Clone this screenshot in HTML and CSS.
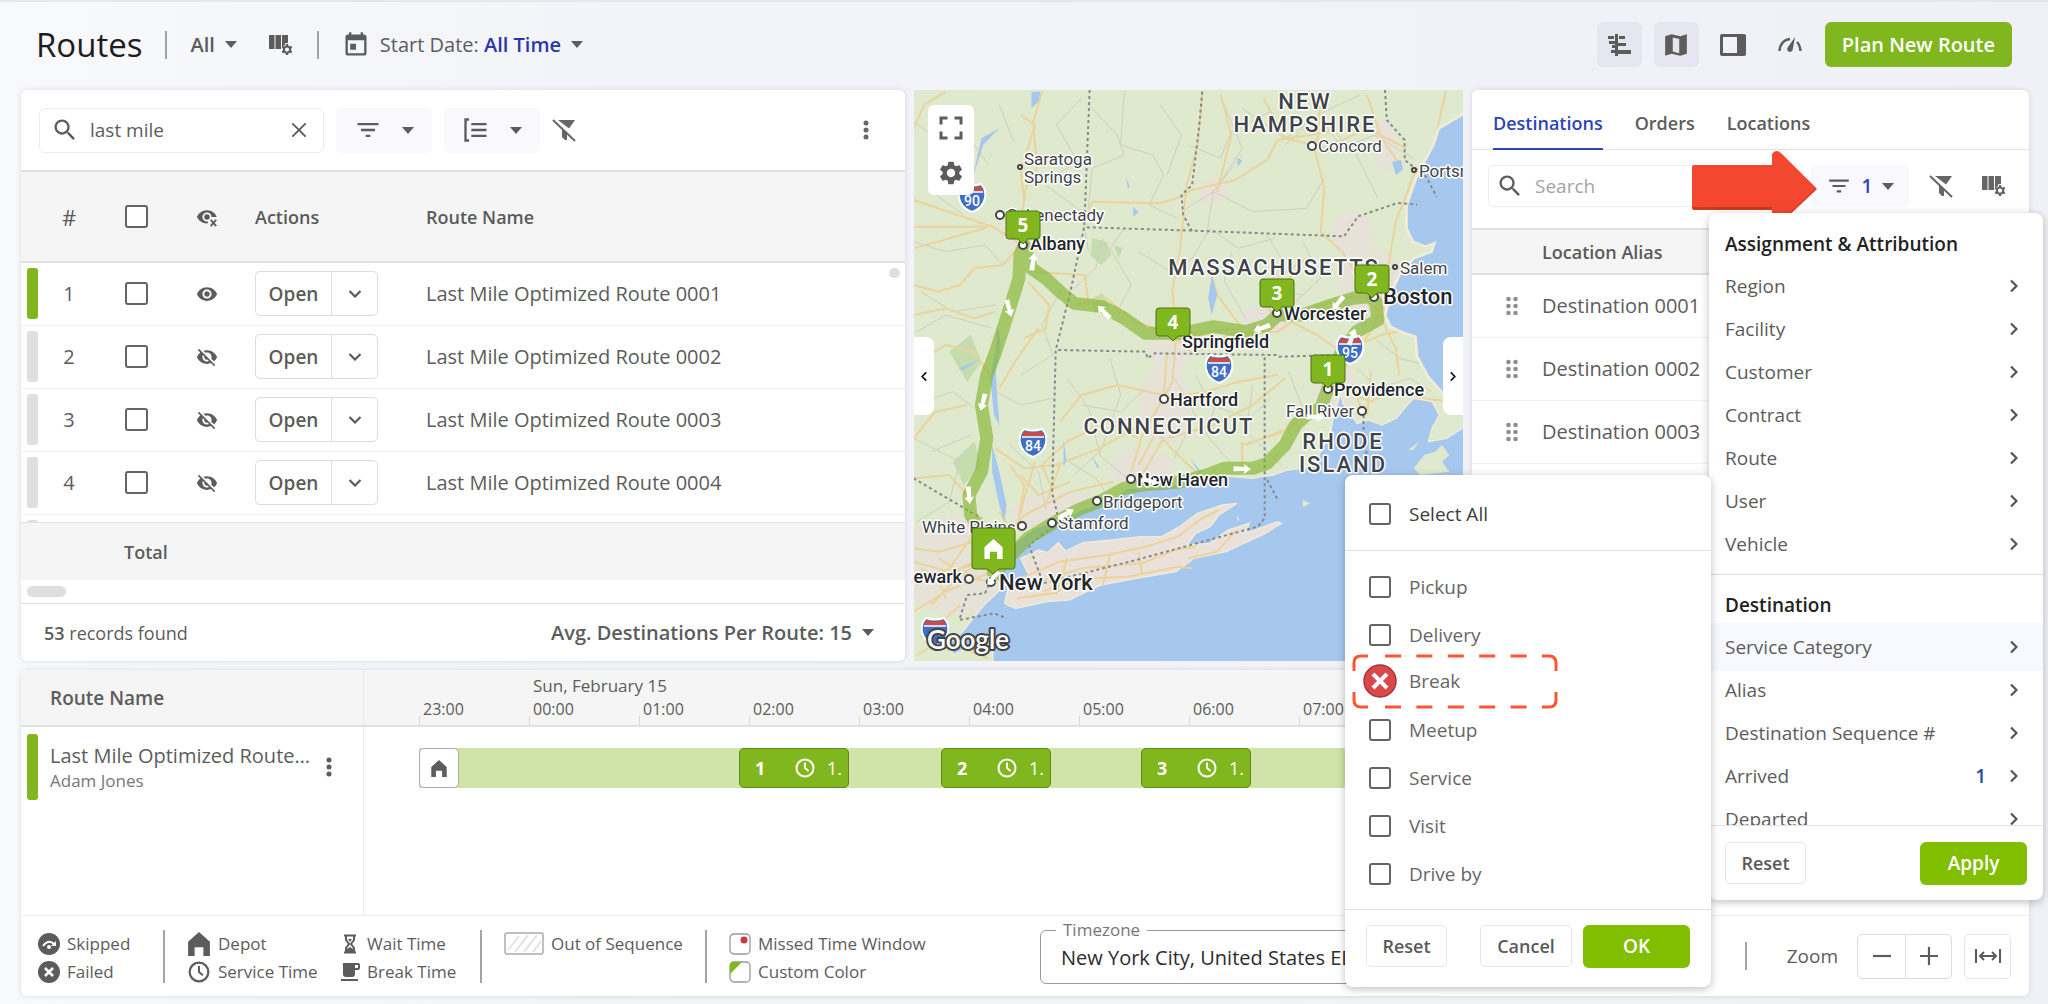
FILE: index.html
```html
<!DOCTYPE html>
<html lang="en">
<head>
<meta charset="utf-8">
<title>Routes</title>
<meta name="viewport" content="width=device-width, initial-scale=1">
<link rel="stylesheet" href="styles.css">
</head>
<body>
<svg class="sprite" aria-hidden="true">
  <symbol id="search" viewBox="0 0 24 24"><path d="M15.5 14h-.79l-.28-.27C15.41 12.59 16 11.11 16 9.5 16 5.91 13.09 3 9.5 3S3 5.91 3 9.5 5.91 16 9.5 16c1.61 0 3.09-.59 4.23-1.57l.27.28v.79l5 4.99L20.49 19l-4.99-5zm-6 0C7.01 14 5 11.99 5 9.5S7.01 5 9.5 5 14 7.01 14 9.5 11.99 14 9.5 14z"/></symbol>
  <symbol id="close" viewBox="0 0 24 24"><path d="M4 4l16 16M20 4L4 20" fill="none" stroke="currentColor" stroke-width="2.2"/></symbol>
  <symbol id="filter" viewBox="0 0 24 24"><path d="M10 18h4v-2h-4v2zM3 6v2h18V6H3zm3 7h12v-2H6v2z"/></symbol>
  <symbol id="group" viewBox="0 0 24 24"><path d="M6 3H3v18h3M8 7h13M8 12h13M8 17h13" fill="none" stroke="currentColor" stroke-width="2"/></symbol>
  <symbol id="nofilter" viewBox="0 0 24 24"><path d="M6 2h17l-6 8.500zM10 11l5 5v6h-2l-3-3z"/><path d="M1 2l22 21" stroke="currentColor" stroke-width="2"/></symbol>
  <symbol id="caret" viewBox="0 0 12 7"><path d="M0 0h12L6 7z"/></symbol>
  <symbol id="dots" viewBox="0 0 6 20"><circle cx="3" cy="3" r="2.500"/><circle cx="3" cy="10" r="2.500"/><circle cx="3" cy="17" r="2.500"/></symbol>
  <symbol id="drag" viewBox="0 0 12 20"><circle cx="2.500" cy="3" r="2.300"/><circle cx="2.500" cy="10" r="2.300"/><circle cx="2.500" cy="17" r="2.300"/><circle cx="9.500" cy="3" r="2.300"/><circle cx="9.500" cy="10" r="2.300"/><circle cx="9.500" cy="17" r="2.300"/></symbol>
  <symbol id="eye" viewBox="0 0 24 24"><path d="M12 4.500C7 4.500 2.730 7.610 1 12c1.730 4.390 6 7.500 11 7.500s9.270-3.110 11-7.500c-1.730-4.390-6-7.500-11-7.500zM12 17c-2.760 0-5-2.240-5-5s2.240-5 5-5 5 2.240 5 5-2.240 5-5 5zm0-8c-1.660 0-3 1.340-3 3s1.340 3 3 3 3-1.340 3-3-1.340-3-3-3z"/></symbol>
  <symbol id="eyeoff" viewBox="0 0 24 24"><path d="M12 7c2.760 0 5 2.240 5 5 0 .65-.13 1.260-.36 1.830l2.920 2.920c1.510-1.260 2.700-2.890 3.430-4.750-1.730-4.390-6-7.500-11-7.500-1.400 0-2.740.25-3.980.7l2.160 2.160C10.740 7.130 11.350 7 12 7zM2 4.270l2.740 2.740C3.080 8.300 1.780 10.020 1 12c1.730 4.390 6 7.500 11 7.500 1.550 0 3.030-.3 4.380-.84l3.350 3.340L21 20.730 3.270 3 2 4.270zM7.530 9.800l1.550 1.550c-.05.21-.08.43-.08.65 0 1.660 1.340 3 3 3 .22 0 .44-.03.65-.08l1.550 1.550c-.67.33-1.410.53-2.200.53-2.760 0-5-2.240-5-5 0-.79.2-1.530.53-2.200z"/></symbol>
  <symbol id="eyex" viewBox="0 0 24 24"><path d="M13 18.900c-5.400.6-9.800-2.500-12-6.900 1.730-4.390 6-7.500 11-7.500s9.270 3.110 10.700 7.500h-5.700c0-2.760-2.240-5-5-5s-5 2.240-5 5 2.240 5 5 5h1z"/><circle cx="12" cy="12" r="3"/><path d="M16 15l6 7M22 15l-6 7" stroke="currentColor" stroke-width="2"/></symbol>
  <symbol id="columns" viewBox="0 0 24 24"><path d="M1 2h5.500v14H1zM7.500 2H13v14H7.500zM14 2h6v8h-2.500l-1 2.500-2.500 1z"/><path fill-rule="evenodd" d="M18 11h2l.4 1.700 1.300.7 1.600-.6 1 1.800-1.200 1.200v1.500l1.200 1.200-1 1.700-1.600-.5-1.300.7-.4 1.700h-2l-.4-1.700-1.300-.7-1.600.5-1-1.700 1.200-1.200v-1.500l-1.200-1.200 1-1.800 1.600.6 1.300-.7zM19 14.500a2.100 2.100 0 1 0 0 4.200 2.100 2.100 0 0 0 0-4.200z"/></symbol>
  <symbol id="calendar" viewBox="0 0 24 24"><path d="M19 3h-1V1h-2v2H8V1H6v2H5c-1.110 0-2 .9-2 2v14c0 1.100.89 2 2 2h14c1.100 0 2-.9 2-2V5c0-1.100-.9-2-2-2zm0 16H5V8h14v11zM7 11h5v5H7z"/></symbol>
  <symbol id="gantt" viewBox="0 0 24 24"><path d="M1 3h6v3H1zM7 1h4v22H8V1zM12 3h6v3h-6zM2 8h6v3H2zM11 10h8v3h-8zM5 12h4v3H5zM4 17h5v3H4zM11 17h13v4H11z"/></symbol>
  <symbol id="map" viewBox="0 0 24 24"><path fill-rule="evenodd" d="M2 4l6-2 8 2 6-2v18l-6 2-8-2-6 2zM9 5v13l6 1.500V6.500z"/></symbol>
  <symbol id="side" viewBox="0 0 26 22"><path fill-rule="evenodd" d="M2 0h22a2 2 0 0 1 2 2v18a2 2 0 0 1-2 2H2a2 2 0 0 1-2-2V2a2 2 0 0 1 2-2zM3 3v16h14V3z"/></symbol>
  <symbol id="gauge" viewBox="0 0 24 20"><path d="M1.500 16C2 9 6 4.500 12 4M19 7c2 2 3.200 5 3.500 9" fill="none" stroke="currentColor" stroke-width="2.400"/><path d="M17 2l-2.300 12.500a2.800 2.800 0 1 1-5.200-1.800z"/></symbol>
  <symbol id="chev" viewBox="0 0 8 14"><path d="M1 1.500L6.500 7 1 12.500" fill="none" stroke="currentColor" stroke-width="2.200"/></symbol>
  <symbol id="home" viewBox="0 0 20 22"><path d="M10 0l10 9v13h-6v-8H6v8H0V9z"/></symbol>
  <symbol id="clock" viewBox="0 0 20 20"><circle cx="10" cy="10" r="8.500" fill="none" stroke="currentColor" stroke-width="2"/><path d="M10 4.500V10l3.500 3" fill="none" stroke="currentColor" stroke-width="1.800"/></symbol>
  <symbol id="gear" viewBox="0 0 24 24"><path d="M19.140 12.940c.04-.3.06-.61.06-.94 0-.32-.02-.64-.07-.94l2.030-1.580c.18-.14.23-.41.12-.61l-1.920-3.320c-.12-.22-.37-.29-.59-.22l-2.390.96c-.5-.38-1.030-.7-1.620-.94l-.36-2.540c-.04-.24-.24-.41-.48-.41h-3.840c-.24 0-.43.17-.47.41l-.36 2.540c-.59.24-1.130.57-1.620.94l-2.390-.96c-.22-.08-.47 0-.59.22L2.740 8.870c-.12.21-.08.47.12.61l2.030 1.580c-.05.3-.09.63-.09.94s.02.64.07.94l-2.030 1.580c-.18.14-.23.41-.12.61l1.920 3.320c.12.22.37.29.59.22l2.390-.96c.5.38 1.030.7 1.620.94l.36 2.540c.05.24.24.41.48.41h3.840c.24 0 .44-.17.47-.41l.36-2.540c.59-.24 1.130-.56 1.620-.94l2.390.96c.22.08.47 0 .59-.22l1.920-3.320c.12-.22.07-.47-.12-.61l-2.010-1.580zM12 15.600c-1.980 0-3.600-1.620-3.600-3.600s1.620-3.600 3.600-3.600 3.600 1.620 3.600 3.600-1.620 3.600-3.600 3.600z"/></symbol>
  <symbol id="full" viewBox="0 0 24 24"><path d="M2 8.500V2h6.500M15.500 2H22v6.500M22 15.500V22h-6.500M8.500 22H2v-6.500" fill="none" stroke="currentColor" stroke-width="3"/></symbol>
  <symbol id="arrow" viewBox="0 0 12 18" overflow="visible"><path d="M6 0l5 7-3-.5.500 11h-5l.500-11-3 .5z"/></symbol>
  <symbol id="shield" viewBox="0 0 28 30"><path d="M5 1q9 3 18 0l3 4q2 5 1 10-2 10-13 14Q3 25 1 15 0 10 2 5z" fill="#3f6fc4" stroke="#fff" stroke-width="2"/><path d="M5 3q9 3 18 0l2 5H3z" fill="#cf4a43"/><path d="M3 9h22" stroke="#fff" stroke-width="1.500"/></symbol>
</svg>

<div class="page">
  <header class="top">
    <h1>Routes</h1>
    <i class="rule"></i>
    <button class="plain" type="button">All <svg class="i-caret"><use href="#caret"/></svg></button>
    <button class="plain" type="button" aria-label="Columns"><svg class="i24"><use href="#columns"/></svg></button>
    <i class="rule"></i>
    <button class="plain date" type="button"><svg class="i28"><use href="#calendar"/></svg><span>Start Date: <b>All Time</b></span><svg class="i-caret"><use href="#caret"/></svg></button>
    <nav class="views">
      <button class="view on" type="button" aria-label="Timeline"><svg class="i24"><use href="#gantt"/></svg></button>
      <button class="view on" type="button" aria-label="Map"><svg class="i26"><use href="#map"/></svg></button>
      <button class="view" type="button" aria-label="Side panel"><svg class="i-side"><use href="#side"/></svg></button>
      <button class="view" type="button" aria-label="Dashboard"><svg class="i24"><use href="#gauge"/></svg></button>
      <button class="green plan" type="button">Plan New Route</button>
    </nav>
  </header>

  <main class="panels">
    <section class="card routes">
      <div class="tools">
        <label class="search"><svg class="i28"><use href="#search"/></svg><input type="text" value="last mile" aria-label="Search routes"><svg class="i-close"><use href="#close"/></svg></label>
        <button class="tool" type="button" aria-label="Filter"><svg class="i28"><use href="#filter"/></svg><svg class="i-caret"><use href="#caret"/></svg></button>
        <button class="tool" type="button" aria-label="Group"><svg class="i28"><use href="#group"/></svg><svg class="i-caret"><use href="#caret"/></svg></button>
        <button class="plain" type="button" aria-label="Clear filters"><svg class="i24"><use href="#nofilter"/></svg></button>
        <button class="plain more" type="button" aria-label="More"><svg class="i-dots"><use href="#dots"/></svg></button>
      </div>
      <div class="grid-view">
        <table class="list">
          <colgroup><col class="c-bar"><col class="c-num"><col class="c-check"><col class="c-eye"><col class="c-act"><col></colgroup>
          <thead><tr><th></th><th class="mid hash">#</th><th class="mid"><input type="checkbox" aria-label="Select all routes"></th><th class="mid"><svg class="i22"><use href="#eyex"/></svg></th><th>Actions</th><th>Route Name</th></tr></thead>
          <tbody>
            <tr><td class="bar"><i class="on"></i></td><td class="mid">1</td><td class="mid"><input type="checkbox" aria-label="Route 1"></td><td class="mid"><svg class="i22"><use href="#eye"/></svg></td><td><span class="split"><button type="button">Open</button><button type="button" aria-label="More actions"><svg class="i-down"><use href="#chev"/></svg></button></span></td><td>Last Mile Optimized Route 0001</td></tr>
            <tr><td class="bar"><i></i></td><td class="mid">2</td><td class="mid"><input type="checkbox" aria-label="Route 2"></td><td class="mid"><svg class="i22"><use href="#eyeoff"/></svg></td><td><span class="split"><button type="button">Open</button><button type="button" aria-label="More actions"><svg class="i-down"><use href="#chev"/></svg></button></span></td><td>Last Mile Optimized Route 0002</td></tr>
            <tr><td class="bar"><i></i></td><td class="mid">3</td><td class="mid"><input type="checkbox" aria-label="Route 3"></td><td class="mid"><svg class="i22"><use href="#eyeoff"/></svg></td><td><span class="split"><button type="button">Open</button><button type="button" aria-label="More actions"><svg class="i-down"><use href="#chev"/></svg></button></span></td><td>Last Mile Optimized Route 0003</td></tr>
            <tr><td class="bar"><i></i></td><td class="mid">4</td><td class="mid"><input type="checkbox" aria-label="Route 4"></td><td class="mid"><svg class="i22"><use href="#eyeoff"/></svg></td><td><span class="split"><button type="button">Open</button><button type="button" aria-label="More actions"><svg class="i-down"><use href="#chev"/></svg></button></span></td><td>Last Mile Optimized Route 0004</td></tr>
            <tr><td class="bar"><i></i></td><td></td><td></td><td></td><td><span class="split"><button type="button"></button><button type="button" aria-label="More actions"></button></span></td><td></td></tr>
          </tbody>
        </table>
        <i class="vthumb"></i>
      </div>
      <div class="total">Total</div>
      <div class="hscroll"><i></i></div>
      <footer class="foot"><span><b>53</b> records found</span><button class="plain strong" type="button">Avg. Destinations Per Route: 15 <svg class="i-caret"><use href="#caret"/></svg></button></footer>
    </section>

    <section class="map">
      <svg class="canvas" viewBox="914 90 549 571" preserveAspectRatio="xMidYMid slice" role="img" aria-label="Route map">
        <rect x="814" y="0" width="800" height="800" fill="#dfe9cd"/>
        <svg x="910" y="85" width="560" height="585" viewBox="0 0 1568 1755" preserveAspectRatio="none" overflow="visible">
          <g fill="#e9e0dc" opacity=".75">
            <ellipse cx="300" cy="430" rx="45" ry="60"/><ellipse cx="730" cy="790" rx="60" ry="70"/><ellipse cx="715" cy="960" rx="70" ry="120"/><ellipse cx="1290" cy="610" rx="90" ry="120"/><ellipse cx="1190" cy="910" rx="60" ry="90"/><ellipse cx="650" cy="1150" rx="90" ry="60"/><ellipse cx="130" cy="1440" rx="170" ry="150"/><ellipse cx="430" cy="1280" rx="150" ry="60"/><ellipse cx="1000" cy="700" rx="70" ry="50"/><ellipse cx="1330" cy="180" rx="30" ry="80"/><ellipse cx="1240" cy="450" rx="60" ry="70"/><ellipse cx="850" cy="320" rx="40" ry="40"/>
          </g>
          <g fill="#b9d6a2" opacity=".7"><path d="M510 460l40 10 15 40-30 30-30-30zM510 640l30-15 15 40-40 20zM110 800l60-50 30 80-40 60zM120 1130l60-60 20 70-50 60zM570 480l25 10-10 30z"/></g>
          <g class="minor">
            <path d="M10 110l80 60 70-20 60 90M120 200l-60 120 90 70M10 470l90 30 110-20 50 60M30 620l90 60 120-20M20 740l80-50 130 40M500 60l80 90 20 60-90 40-10 120M600 20l-10 160 90 30 30 60-40 90 80 40M700 60l60 90-40 120M780 180l90 40 30-80 110-60M880 60l50 130-60 100M930 70l120 90 60-40M850 320l-90 60M850 320l110 60 150-10 50-90M850 320l-20 130M850 320l80-110M540 460l-20 90-60 60M600 430l-40 60 60 110-40 80M640 500l90 60 60-40 50-90 80 60 100-30M900 500l-20 90 60 110M1000 450l50 90-60 70 110 20M1100 470l50 110-80 80"/>
            <path d="M10 960l110-40 60 50M60 1100l110-50M240 920l70 40 90-20M440 880l60 90 30 130-70 70M480 960l110 20 60-60M560 820l30 110-60 180 90 80M800 870l40 90 110 40 60-60M860 940l-30 110 90 110M960 900l-20 140 100 100M1060 860l40 110-50 60M740 880l60 110-60 130M1250 850l60 60 90-30 60 40M1300 760l70 60 110 30M430 1120l90 60 60 90M280 1080l80 80 20 110M10 1060l130 70-30 120-90 60M1410 220l-110-70-90 40-60-90M1170 120l80 90 60 130M1050 180l110-100 100-50M480 40l-70 80 60 110-90 60M380 300l100 80 20 120M430 600l-60 120 30 90-90 60M250 60l40 110"/>
          </g>
          <g class="roads">
            <path d="M370 20l-25 90 10 140-30 60-15 100 20 90M10 345l220 80 80 50M10 490l200-60M310 90l40 30-40 140 10 80M10 130l30-70 60-40M10 425h210M310 480l-50 60-80 10-40 50-60 20-70-20M320 410l180-30 10-30 190 5 60-20 30-20 120-30 90-60 30-60 120-20 40-10M820 20l-15 160-30 120-20 200-20 110 10 150-10 130-20 40M870 30l30 120-40 170M990 40l60 120 80 20 30 130-10 130 60 60 60 100 20 80M1150 190l70-30 60-30 110 60M1150 30l-10 150M1280 30l40 130 60 90M1500 20l-40 190-50 60-20 60-30 80-20 130-40 60-30 40"/>
            <path d="M10 690l90-20 80 30 60-20M340 560l150 10 10 90M330 590l60 70-10 70-60 30M460 660l90-20 80 70 100 35 60 60 110-60 130-5 90-70 100-30 190-25M740 750l190-20-70-100-20-80M1020 700l-30-60 40-60 80-60M1070 560l-40 130 110 60 80 60M1290 640l60 50 130 10 20 60M1300 660l60 130 10 80M1210 800l110-50 90-20M1170 900l60-70 60-90 20-50M360 730l-60 90-50 90M10 840l90-60 80 20 60 100M720 800l-10 140-60 110-30 110M720 940l110-20 90-30 110-20M710 930l-130-30-100 30-60 80M640 1060l-90-50-110 60-70 70 30 80M720 1060l130-40 110-60 90-80"/>
            <path d="M240 1090l80 60 90-10 120-50 100-60M310 1170l50 60 90-40M280 1140l40 60-20 130M350 1130l-30 110-30 120M420 1140l-40 120M10 1060l60-80 90-20M10 1180l100-10 50 60M930 1070v90M800 1160l-60-60-50-60-50 100M650 1170l60-110M1050 1040l-120 40M1110 990l-50 40-120 50M1180 930l60-30 30 90M1200 910l90 40 80-40 60 30 90 10M1290 860l-10 130M260 1360l60-70 130-70 120-30M250 1280l40 70M200 1300l60 60M10 1390l70 10 100-30M10 1430l100 30 130-40M20 1500l90-50 60-90M60 1560l70-80 80-60M10 1580l90-60 130-60M80 1420l90 60 60 10M100 1540l-20-60-50-30M30 1660l60-50 50-50M20 1710l90-60 60 50 50 20M120 1460l80-40 60-80"/>
          </g>
          <g fill="#a6c8ee">
            <path d="M340 20h25l-5 30-20 20zM250 130l-50 30-25 120 30-100zM605 275l10 30-5 5zM625 365l15 15-15 15zM845 570l15 60-15 60-10-50zM915 220l15 5-10 20zM1350 230l25-5 5 30-20 15zM135 850l60-25-30 20-15 10zM245 720l10 60-15 80 10 160-15-30-10-110 15-90zM230 1080l20 80 20 100-5 50-15-50-20-100zM430 1065l8 60-8 20zM510 1115l20 30-5 5zM785 1120l30 40-5 5z"/>
            <path d="M1590 60l-45 30-65 40-15 50-45 90-30 90v70l18 40 35 15 25-10-8 25-50 20-40 50-25 60-15 60 15 35 40 20 30 10 5 60 30 60 50 60h120z" stroke="#f1ecd8" stroke-width="8"/>
            <path d="M232 1640v200h1400v-840l-70 20-60 40-50 10 10-40 20-40-20-40-50-10-20 20-30 40-40 20-40-15-30 10-40-60-5-30-20 60-10 60-30 60-20 40-70 10-40 15-60 10-100-10-60 20-90 15-100 5-40 30-90 35-70 35-60 20-60 50-30 60 10 60-60 60-60 80-40 40 15 30z" stroke="#f1ecd8" stroke-width="4"/>
          </g>
          <path d="M310 1420l50-25 25 8 30-30 20 25 50-25 80-8 80-10h60l50-30 50-40 70-25 40-5-50 35-25 35-40 20-25 35 65-5 50-40 60-20-10 30 90-35 10 5-45 30-110 55-90 20-50 40-110 20-100 20-90 45-60 5-90 20-30-15 10-50 60-30z" fill="#eae2da" stroke="#f1ecd8" stroke-width="4"/>
          <path d="M250 1570l120-25 130-30-130 35zM1100 1245l20 10-20 12zM1410 1150l30-40 30-10 20-20 20 30-20 20 20 30-80 10zM1395 1095l30-25-15 25zM915 1290l8 15-5 5z" fill="#dfe9cd"/>
          <g class="roads"><path d="M310 1480l110-50 130-20 110-25 90-30 60-50 55-30M330 1500l150-50 170-15 90-40 60-10M370 1520l110-40 130-5 140-30 40 5M300 1540l100-15 90-40M440 1420l-30 110M560 1410l-20 90M640 1400l10 70M780 1420l80-20 50-60"/></g>
          <g class="states">
            <path d="M503 15l-15 410-40 200-40 170-10 430 20 85-85 70 40 115 260-70 340-100 20-25 0-485M495 427l300 10 420 17 40-60 110-40 55 5M818 20l-8 100-20 180-30 30 5 60 25 50M1330 15l5 90 50 60v60l60 50 30 60M415 795l245 5 5 20 20-15 340 5 5 5 180-5M10 1180l190 120M1000 1185l30 60M1270 990v50l10 80M220 1500l-10 25-50 5-22 75 98-20 35 15"/>
          </g>
          <path class="track" d="M235 1480L255 1440 330 1360 400 1315 470 1275 540 1245 600 1210 650 1200 760 1190 830 1170 880 1150 960 1150 1000 1135 1050 1080 1080 1020 1110 990 1150 970 1170 910 1180 860 1210 800 1250 740 1310 705 1305 650 1285 635 1240 640 1180 660 1100 690 1030 690 1000 720 940 740 850 725 760 745 660 745 600 700 540 665 460 655 420 620 380 580 340 550 320 480 308 510 305 580 285 650 240 800 215 870 200 960 215 1060 200 1160 165 1230 170 1290 220 1380 235 1470"/>
        </svg>
        <g class="shields">
          <use href="#shield" x="958" y="183" width="28" height="30"/><text x="972" y="206">90</text>
          <use href="#shield" x="1205" y="354" width="28" height="30"/><text x="1219" y="377">84</text>
          <use href="#shield" x="1336" y="335" width="28" height="30"/><text x="1350" y="358">95</text>
          <use href="#shield" x="1019" y="428" width="28" height="30"/><text x="1033" y="451">84</text>
          <use href="#shield" x="921" y="617" width="28" height="30"/>
        </g>
        <g class="dots">
          <circle cx="1312" cy="146" r="4"/><circle cx="1020" cy="167" r="2"/><circle cx="1000" cy="215" r="4"/><circle cx="1023" cy="245" r="4"/><circle cx="1414" cy="170" r="2"/><circle cx="1395" cy="267" r="2"/><circle cx="1374" cy="297" r="4"/><circle cx="1277" cy="313" r="4"/><circle cx="1164" cy="399" r="4"/><circle cx="1328" cy="389" r="4"/><circle cx="1362" cy="411" r="4"/><circle cx="1131" cy="479" r="4"/><circle cx="1097" cy="501" r="4"/><circle cx="1052" cy="523" r="4"/><circle cx="1022" cy="526" r="4"/><circle cx="969" cy="579" r="4"/><circle cx="991" cy="582" r="4"/>
        </g>
        <g class="town">
          <text x="1318" y="152">Concord</text><text x="1024" y="165">Saratoga</text><text x="1024" y="183">Springs</text><text x="1007" y="221">Schenectady</text><text x="1419" y="177">Portsmouth</text><text x="1400" y="274">Salem</text><text x="1286" y="417">Fall River</text><text x="1103" y="508">Bridgeport</text><text x="1058" y="529">Stamford</text><text x="922" y="533">White Plains</text>
        </g>
        <g class="city">
          <text x="1030" y="250">Albany</text><text x="1284" y="320">Worcester</text><text x="1182" y="348">Springfield</text><text x="1334" y="396">Providence</text><text x="1170" y="406">Hartford</text><text x="1137" y="486">New Haven</text><text x="962" y="583" text-anchor="end">Newark</text>
        </g>
        <g class="metro"><text x="1383" y="304">Boston</text><text x="999" y="590">New York</text></g>
        <g class="state"><text x="1305" y="109">NEW</text><text x="1305" y="132">HAMPSHIRE</text><text x="1274" y="275">MASSACHUSETTS</text><text x="1169" y="434">CONNECTICUT</text><text x="1343" y="449">RHODE</text><text x="1343" y="472">ISLAND</text></g>
        <text class="google" x="927" y="649">Google</text>
        <g fill="#fff">
          <use href="#arrow" x="1027" y="253" width="12" height="18" transform="rotate(8 1033 262)"/>
          <use href="#arrow" x="1003" y="299" width="12" height="18" transform="rotate(165 1009 308)"/>
          <use href="#arrow" x="1098" y="303" width="12" height="18" transform="rotate(-45 1104 312)"/>
          <use href="#arrow" x="1256" y="319" width="12" height="18" transform="rotate(-110 1262 328)"/>
          <use href="#arrow" x="1332" y="294" width="12" height="18" transform="rotate(-140 1338 303)"/>
          <use href="#arrow" x="1346" y="328" width="12" height="18" transform="rotate(20 1352 337)"/>
          <use href="#arrow" x="977" y="393" width="12" height="18" transform="rotate(195 983 402)"/>
          <use href="#arrow" x="963" y="486" width="12" height="18" transform="rotate(175 969 495)"/>
          <use href="#arrow" x="1060" y="505" width="12" height="18" transform="rotate(60 1066 514)"/>
          <use href="#arrow" x="1144" y="472" width="12" height="18" transform="rotate(105 1150 481)"/>
          <use href="#arrow" x="1236" y="460" width="12" height="18" transform="rotate(92 1242 469)"/>
          <use href="#arrow" x="1309" y="408" width="12" height="18" transform="rotate(92 1315 417)"/>
          <use href="#arrow" x="987" y="569" width="12" height="18" transform="rotate(220 993 578)"/>
        </g>
        <g class="pins">
          <path d="M1009 211h28a3 3 0 0 1 3 3v22a3 3 0 0 1-3 3h-9l-5 5-5-5h-9a3 3 0 0 1-3-3v-22a3 3 0 0 1 3-3z"/><text x="1023" y="232">5</text>
          <path d="M1358 265h28a3 3 0 0 1 3 3v22a3 3 0 0 1-3 3h-9l-5 5-5-5h-9a3 3 0 0 1-3-3v-22a3 3 0 0 1 3-3z"/><text x="1372" y="286">2</text>
          <path d="M1263 279h28a3 3 0 0 1 3 3v22a3 3 0 0 1-3 3h-9l-5 5-5-5h-9a3 3 0 0 1-3-3v-22a3 3 0 0 1 3-3z"/><text x="1277" y="300">3</text>
          <path d="M1159 308h28a3 3 0 0 1 3 3v22a3 3 0 0 1-3 3h-9l-5 5-5-5h-9a3 3 0 0 1-3-3v-22a3 3 0 0 1 3-3z"/><text x="1173" y="329">4</text>
          <path d="M1314 355h28a3 3 0 0 1 3 3v22a3 3 0 0 1-3 3h-9l-5 5-5-5h-9a3 3 0 0 1-3-3v-22a3 3 0 0 1 3-3z"/><text x="1328" y="376">1</text>
          <path d="M975 528h37a3 3 0 0 1 3 3v35a3 3 0 0 1-3 3h-13l-6 5-6-5h-12a3 3 0 0 1-3-3v-35a3 3 0 0 1 3-3z"/>
        </g>
        <use href="#home" x="983" y="539" width="21" height="20" fill="#fff"/>
      </svg>
      <div class="map-tools"><button type="button" aria-label="Full screen"><svg class="i24"><use href="#full"/></svg></button><button type="button" aria-label="Map settings"><svg class="i28"><use href="#gear"/></svg></button></div>
      <button class="handle left" type="button" aria-label="Collapse left"><svg class="i-chev flip"><use href="#chev"/></svg></button>
      <button class="handle right" type="button" aria-label="Collapse right"><svg class="i-chev"><use href="#chev"/></svg></button>
    </section>

    <section class="card dest">
      <nav class="tabs"><a class="on" href="#destinations">Destinations</a><a href="#orders">Orders</a><a href="#locations">Locations</a></nav>
      <div class="tools slim">
        <label class="search"><svg class="i28"><use href="#search"/></svg><input type="text" placeholder="Search" aria-label="Search destinations"></label>
        <button class="tool" type="button" aria-label="Filters, 1 active"><svg class="i26"><use href="#filter"/></svg><b>1</b><svg class="i-caret"><use href="#caret"/></svg></button>
        <button class="plain" type="button" aria-label="Clear filters"><svg class="i24"><use href="#nofilter"/></svg></button>
        <button class="plain" type="button" aria-label="Columns"><svg class="i24"><use href="#columns"/></svg></button>
      </div>
      <table class="list small">
        <colgroup><col class="c-drag"><col></colgroup>
        <thead><tr><th></th><th>Location Alias</th></tr></thead>
        <tbody>
          <tr><td><svg class="i-drag"><use href="#drag"/></svg></td><td>Destination 0001</td></tr>
          <tr><td><svg class="i-drag"><use href="#drag"/></svg></td><td>Destination 0002</td></tr>
          <tr><td><svg class="i-drag"><use href="#drag"/></svg></td><td>Destination 0003</td></tr>
        </tbody>
      </table>

      <svg class="pointer" viewBox="0 0 128 76" aria-hidden="true"><path d="M3 17h78V5q4-6 10 0l35 34-36 34q-5 4-9-1V60H3q-2 0-2-3V19q0-2 2-2z" fill="#c83c22"/><path d="M3 15h78V4q4-6 10 0l34 34-34 33q-6 5-10-1V57H3q-2 0-2-3V17q0-2 2-2z" fill="#f4472f"/></svg>

      <div class="menu">
        <div class="menu-body">
          <h2>Assignment &amp; Attribution</h2>
          <button type="button">Region<svg class="i-chev"><use href="#chev"/></svg></button>
          <button type="button">Facility<svg class="i-chev"><use href="#chev"/></svg></button>
          <button type="button">Customer<svg class="i-chev"><use href="#chev"/></svg></button>
          <button type="button">Contract<svg class="i-chev"><use href="#chev"/></svg></button>
          <button type="button">Route<svg class="i-chev"><use href="#chev"/></svg></button>
          <button type="button">User<svg class="i-chev"><use href="#chev"/></svg></button>
          <button type="button">Vehicle<svg class="i-chev"><use href="#chev"/></svg></button>
          <hr>
          <h2>Destination</h2>
          <button class="on" type="button">Service Category<svg class="i-chev"><use href="#chev"/></svg></button>
          <button type="button">Alias<svg class="i-chev"><use href="#chev"/></svg></button>
          <button type="button">Destination Sequence #<svg class="i-chev"><use href="#chev"/></svg></button>
          <button type="button">Arrived<b>1</b><svg class="i-chev"><use href="#chev"/></svg></button>
          <button type="button">Departed<svg class="i-chev"><use href="#chev"/></svg></button>
        </div>
        <div class="menu-foot"><button class="outline" type="button">Reset</button><button class="green bright" type="button">Apply</button></div>

        <div class="options">
          <label class="all"><input type="checkbox">Select All</label>
          <div class="choices">
            <label><input type="checkbox">Pickup</label>
            <label><input type="checkbox">Delivery</label>
            <label class="flag"><input type="checkbox">Break
              <svg class="dashes" viewBox="0 0 206 55" aria-hidden="true"><path d="M2 17V9q0-7 7-7h7M190 2h7q7 0 7 7v8M204 38v8q0 7-7 7h-7M16 53H9q-7 0-7-7v-8"/><path d="M33 2h142M33 53h142" stroke-dasharray="16 15.400"/></svg>
              <svg class="cross" viewBox="0 0 34 34" aria-hidden="true"><circle cx="17" cy="17" r="16" fill="#da484c" stroke="#a93238" stroke-width="1.500"/><path d="M10 10l14 14M24 10L10 24" stroke="#fff" stroke-width="4"/></svg>
            </label>
            <label><input type="checkbox">Meetup</label>
            <label><input type="checkbox">Service</label>
            <label><input type="checkbox">Visit</label>
            <label><input type="checkbox">Drive by</label>
          </div>
          <div class="options-foot"><button class="outline" type="button">Reset</button><button class="outline cancel" type="button">Cancel</button><button class="green bright" type="button">OK</button></div>
        </div>
      </div>
    </section>
  </main>

  <section class="card timeline">
    <div class="tl-head">
      <div class="tl-name">Route Name</div>
      <div class="hours"><span>23:00</span><span><em>Sun, February 15</em>00:00</span><span>01:00</span><span>02:00</span><span>03:00</span><span>04:00</span><span>05:00</span><span>06:00</span><span>07:00</span></div>
    </div>
    <div class="tl-body">
      <div class="tl-route"><i class="strip"></i><div class="who"><p>Last Mile Optimized Route 0001</p><small>Adam Jones</small></div><svg class="i-dots"><use href="#dots"/></svg></div>
      <div class="lane">
        <div class="run">
          <span class="depot"><svg class="i-depot"><use href="#home"/></svg></span>
          <span class="stop" style="left:320px"><b>1</b><svg class="i20"><use href="#clock"/></svg>1.</span>
          <span class="stop" style="left:522px"><b>2</b><svg class="i20"><use href="#clock"/></svg>1.</span>
          <span class="stop" style="left:722px"><b>3</b><svg class="i20"><use href="#clock"/></svg>1.</span>
        </div>
      </div>
    </div>
    <footer class="legend">
      <ul class="l-a"><li><svg class="i22" viewBox="0 0 22 22"><circle cx="11" cy="11" r="11"/><path d="M5 13q6-8 12-1" fill="none" stroke="#fff" stroke-width="2"/><path d="M18 8v5h-5z" fill="#fff"/><circle cx="11" cy="14" r="2" fill="#fff"/></svg>Skipped</li><li><svg class="i22" viewBox="0 0 22 22"><circle cx="11" cy="11" r="11"/><path d="M7 7l8 8M15 7l-8 8" stroke="#fff" stroke-width="2.500"/></svg>Failed</li></ul>
      <ul class="l-b"><li><svg class="i24"><use href="#home"/></svg>Depot</li><li><svg class="i24 tight"><use href="#clock"/></svg>Service Time</li></ul>
      <ul class="l-c"><li><svg class="i20" viewBox="0 0 20 20"><path d="M4 1.500h12M4 18.500h12M6 2v4l3 4-3 4v4M14 2v4l-3 4 3 4v4" fill="none" stroke="currentColor" stroke-width="2"/><path d="M7 18v-3l3-2 3 2v3zM8 5h4l-2 3z"/></svg>Wait Time</li><li><svg class="i20" viewBox="0 0 20 20"><path fill-rule="evenodd" d="M3 1h15q2 0 2 2v3q0 2-2 2h-3v4q0 3-3 3H6q-3 0-3-3zM15 3v3h3V3zM1 17h17v2H1z"/></svg>Break Time</li></ul>
      <ul class="l-d"><li><svg class="i-hatch" viewBox="0 0 40 23"><rect x="1" y="1" width="38" height="21" rx="2" fill="#fff" stroke="#aaa" stroke-width="1.500"/><path d="M4 18L15 4M11 20L24 3M20 20L33 3M29 20l8-11" stroke="#ddd" stroke-width="1.500"/></svg>Out of Sequence</li><li></li></ul>
      <ul class="l-e"><li><svg class="i22" viewBox="0 0 22 22"><rect x="1" y="1" width="20" height="20" rx="4" fill="#fff" stroke="#999" stroke-width="1.300"/><circle cx="15" cy="7" r="3.500" fill="#c9393f"/></svg>Missed Time Window</li><li><svg class="i22" viewBox="0 0 22 22"><rect x="1" y="1" width="20" height="20" rx="4" fill="#fff" stroke="#999" stroke-width="1.300"/><path d="M1 13V4q0-3 3-3h9z" fill="#80b61e"/></svg>Custom Color</li></ul>
      <fieldset class="zone"><legend>Timezone</legend><select aria-label="Timezone"><option>New York City, United States EDT</option></select></fieldset>
      <div class="zoom"><i class="rule"></i><span>Zoom</span><span class="split pm"><button type="button" aria-label="Zoom out"><svg class="i20" viewBox="0 0 20 20"><path d="M1 10h18" stroke="currentColor" stroke-width="2.200"/></svg></button><button type="button" aria-label="Zoom in"><svg class="i20" viewBox="0 0 20 20"><path d="M1 10h18M10 1v18" stroke="currentColor" stroke-width="2.200"/></svg></button></span><button class="outline fit" type="button" aria-label="Fit"><svg class="i-side" viewBox="0 0 26 16"><path d="M1 1v14M25 1v14M5 8h16M9 4L5 8l4 4M17 4l4 4-4 4" fill="none" stroke="currentColor" stroke-width="2"/></svg></button></div>
    </footer>
  </section>
</div>
</body>
</html>
```
FILE: styles.css
```css
* { box-sizing: border-box; }
body { margin: 0; font: 20px/28px "Open Sans", "Noto Sans", sans-serif; color: #5c5c5c; background: linear-gradient(90deg, #f7f9fb, #f3f4f9 30%, #f0f1f6); }
button, input, select { font: inherit; color: inherit; }
button { display: inline-flex; align-items: center; justify-content: center; padding: 0; border: 0; background: none; white-space: nowrap; }
svg { flex: none; fill: currentColor; }
.sprite { position: absolute; width: 0; height: 0; }
h1, h2, p, ul { margin: 0; padding: 0; }
table { border-collapse: collapse; }

.i20 { width: 20px; height: 20px; }
.i22 { width: 22px; height: 22px; }
.i24 { width: 24px; height: 24px; }
.i26 { width: 26px; height: 26px; }
.i28 { width: 28px; height: 28px; }
.i-caret { width: 12px; height: 7px; }
.i-dots { width: 6px; height: 20px; }
.i-drag { width: 12px; height: 20px; color: #8f8f8f; }
.i-chev { width: 8px; height: 14px; }
.i-down { width: 8px; height: 14px; transform: rotate(90deg); }
.i-close { width: 20px; height: 20px; }
.i-side { width: 26px; height: 22px; }
.i-depot { width: 16px; height: 17px; }
.i-hatch { width: 40px; height: 23px; }
.flip { transform: rotate(180deg); }

input[type="checkbox"] { appearance: none; display: block; width: 23px; height: 23px; margin: 0; border: 2px solid #646464; border-radius: 3px; background: #fff; }

.page { display: flex; flex-direction: column; min-height: 100vh; padding: 0 19px 8px 21px; border-top: 2px solid #e6e7eb; }
.card { background: #fff; border-radius: 6px; box-shadow: 0 0 5px rgba(60, 64, 90, .16); }

/* Page header */
.top { display: flex; align-items: center; height: 88px; padding: 0 17px 3px 15px; }
h1 { font-size: 33px; line-height: 44px; font-weight: 400; color: #1d1d1f; margin-right: 23px; }
.rule { width: 2px; height: 28px; background: #a2a3a6; }
.plain { gap: 10px; }
.top .rule + .plain { margin-left: 23px; }
.top .plain + .plain { margin-left: 31px; margin-right: 25px; }
.top > .plain { font-weight: 600; }
.date span { font-weight: 400; }
.date b { font-weight: 600; color: #2a37a5; }
.views { display: flex; align-items: center; gap: 12px; margin-left: auto; }
.view { width: 45px; height: 45px; border-radius: 6px; }
.view.on { background: #e6e6f1; }
.green { background: #80b61e; color: #fff; font-weight: 600; border-radius: 6px; }
.plan { height: 45px; padding: 0 17px; }

/* Panels */
.panels { display: grid; grid-template-columns: minmax(0, 884fr) minmax(0, 549fr) minmax(0, 557fr); gap: 9px; flex: 1; min-height: 571px; }
.routes { display: flex; flex-direction: column; }
.tools { display: flex; align-items: center; gap: 12px; height: 82px; padding: 0 18px; border-bottom: 2px solid #e0e0e0; font-size: 19px; }
.tools > .plain { color: #666; }
.search { display: flex; align-items: center; width: 285px; height: 45px; padding: 0 14px 0 11px; border: 1px solid #ececf0; border-radius: 6px; gap: 11px; }
.search input { flex: 1; min-width: 0; border: 0; padding: 0; outline: 0; background: none; }
.search input::placeholder { color: #a3a3a3; opacity: 1; }
.tool { gap: 20px; width: 96px; height: 45px; border-radius: 6px; background: #f8f8fd; }
.tools .more { margin: 0 18px 0 auto; }

.grid-view { position: relative; flex: 1 1 0; overflow: hidden; }
.list { width: 100%; table-layout: fixed; }
.list th { height: 90px; padding: 0 0 0 15px; text-align: left; font-size: 18px; font-weight: 600; color: #5a5a5a; background: #f5f5f5; border-bottom: 2px solid #e0e0e0; white-space: nowrap; }
.list td { height: 63px; padding: 0 0 0 15px; border-bottom: 1px solid #f1f1f1; white-space: nowrap; }
.list .mid { padding: 0; text-align: center; }
.list .mid svg, .list .mid input { display: block; margin: 0 auto; }
.list .hash { font-size: 22px; font-weight: 400; }
.list td.bar { padding: 0 0 0 6px; }
.bar i { display: block; width: 11px; height: 51px; border-radius: 3px; background: #dfdfdf; }
.bar i.on, .strip { background: #80b61e; }
.c-bar { width: 18px; }
.c-num { width: 60px; }
.c-check { width: 75px; }
.c-eye { width: 66px; }
.c-act { width: 171px; }
.split { display: inline-flex; width: 123px; height: 45px; border: 1px solid #dcdcdc; border-radius: 5px; font-weight: 600; font-size: 19px; vertical-align: middle; }
.split button { width: 75px; }
.split button + button { flex: 1; border-left: 1px solid #dcdcdc; }
.vthumb { position: absolute; top: 96px; right: 5px; width: 11px; height: 10px; border-radius: 5px; background: #dedede; }
.total { height: 58px; padding: 0 103px; line-height: 58px; font-size: 18px; font-weight: 600; background: #f5f5f5; border-top: 1px solid #e4e4e4; }
.hscroll { height: 23px; padding: 6px; }
.hscroll i { display: block; width: 39px; height: 11px; border-radius: 6px; background: #dedede; }
.foot { display: flex; align-items: center; justify-content: space-between; height: 58px; padding: 0 31px 0 23px; font-size: 18px; border-top: 1px solid #e2e2e4; }
.foot b { font-weight: 600; }
.strong { font-weight: 600; font-size: 20px; }

/* Map */
.map { position: relative; overflow: hidden; }
.canvas { display: block; position: absolute; width: 100%; height: 100%; }
.minor path, .roads path, .states path, .track { fill: none; vector-effect: non-scaling-stroke; stroke-linejoin: round; }
.minor path { stroke: #cfcec0; stroke-width: 1px; }
.roads path { stroke: #ebd49b; stroke-width: 2px; }
.states path { stroke: #85898c; stroke-width: 2px; stroke-dasharray: 3 3; }
.track { stroke: rgba(132, 181, 48, .65); stroke-width: 13px; }
.canvas text { font-family: Roboto, sans-serif; }
.town text, .city text, .metro text, .state text { stroke: #fff; stroke-width: 3px; stroke-linejoin: round; paint-order: stroke; fill: #3f434a; }
.town { font-size: 17px; }
.city { font-size: 18px; font-weight: 500; }
.metro { font-size: 22px; font-weight: 500; }
.state { font-size: 22px; font-weight: 500; letter-spacing: 2px; text-anchor: middle; }
.city text, .metro text { fill: #22262b; }
.shields text { font-size: 14px; font-weight: 500; fill: #fff; text-anchor: middle; }
.dots circle { fill: #fff; stroke: #444; stroke-width: 2px; }
.pins path { fill: #80b61e; stroke: #4d7312; stroke-width: 1px; }
.canvas .pins text { font: 700 19px "Open Sans", sans-serif; fill: #fff; text-anchor: middle; }
.canvas .google { font: 600 26px Lato, sans-serif; fill: #fff; stroke: #444; stroke-width: 4px; stroke-linejoin: round; paint-order: stroke; }
.map-tools { position: absolute; left: 14px; top: 15px; display: flex; flex-direction: column; width: 46px; border-radius: 6px; background: #fff; }
.map-tools button { height: 45px; }
.handle { position: absolute; top: 247px; width: 20px; height: 78px; background: #fff; color: #111; }
.handle.left { left: 0; border-radius: 0 8px 8px 0; }
.handle.right { right: 0; border-radius: 8px 0 0 8px; }
.handle .i-chev { width: 6px; height: 11px; }

/* Destinations */
.dest { position: relative; }
.tabs { display: flex; gap: 32px; height: 60px; padding: 0 21px; font-size: 18px; font-weight: 600; border-bottom: 1px solid #e4e4e6; }
.tabs a { display: flex; align-items: center; height: 60px; padding-top: 8px; color: inherit; text-decoration: none; border-bottom: 2px solid transparent; }
.tabs a.on { color: #2b45b5; border-color: #2b45b5; }
.slim { padding: 0 24px 6px 16px; gap: 20px; height: 80px; }
.slim .search { flex: 1; min-width: 0; height: 42px; padding-left: 7px; }
.slim .tool { width: 98px; height: 42px; gap: 10px; }
.slim .plain + .plain { margin-left: 8px; }
.slim .tool b { font-weight: 600; color: #2b45b5; }
.small th { height: 44px; padding-left: 0; }
.small td { padding-left: 0; }
.small td:first-child { padding-left: 34px; }
.small svg { display: block; }
.c-drag { width: 70px; }
.pointer { position: absolute; left: 219px; top: 60px; width: 128px; height: 76px; z-index: 2; }

/* Filter menu */
.menu { position: absolute; z-index: 3; top: 123px; right: -14px; width: 334px; height: 687px; display: flex; flex-direction: column; background: #fff; border-radius: 8px; box-shadow: 0 2px 8px rgba(0, 0, 0, .26); font-size: 19px; }
.menu-body { flex: 1; overflow: hidden; padding-top: 11px; }
.menu h2 { height: 40px; padding-left: 16px; font-size: 19px; line-height: 40px; font-weight: 600; color: #222; }
.menu-body button { display: flex; width: 100%; height: 43px; padding: 0 25px 0 16px; justify-content: flex-start; }
.menu-body button svg { margin-left: auto; color: #555; }
.menu-body b { margin: 0 0 0 auto; font-weight: 600; color: #2b45b5; }
.menu-body b + svg { margin-left: 24px; }
.menu-body .on { background: #f8f9fe; box-shadow: 0 3px #f8f9fe, 0 -2px #f8f9fe; }
.menu hr { margin: 9px 0 10px; border: 0; border-top: 1px solid #ddd; }
.menu-foot { display: flex; justify-content: space-between; align-items: center; height: 75px; padding: 0 16px; border-top: 1px solid #e2e2e2; }
.outline { height: 42px; width: 81px; border: 1px solid #e6e6e6; border-radius: 5px; color: #5a5a5a; font-weight: 600; font-size: 18px; }
.bright { width: 107px; height: 43px; background: #81be00; font-size: 19px; font-weight: 600; }

/* Category options */
.options { position: absolute; top: 262px; right: 332px; width: 366px; background: #fff; border-radius: 8px; box-shadow: 0 2px 8px rgba(0, 0, 0, .26); font-size: 19px; }
.options label { position: relative; display: flex; align-items: center; gap: 18px; height: 48px; padding-left: 24px; color: #666; }
.options input { width: 22px; height: 22px; }
.options .all { height: 76px; padding-top: 2px; color: #3c3c3c; border-bottom: 1px solid #e0e0e0; }
.choices { padding: 12px 0 11px; }
.options .flag { height: 44px; }
.options .flag + label { margin-top: 3px; }
.flag input { visibility: hidden; }
.dashes { position: absolute; left: 7px; top: -5px; width: 206px; height: 55px; fill: none; stroke: #fb5631; stroke-width: 3px; }
.cross { position: absolute; left: 18px; top: 5px; width: 34px; height: 34px; }
.options-foot { display: flex; align-items: center; height: 78px; padding: 0 21px 5px; border-top: 1px solid #e0e0e0; }
.options-foot .cancel { width: 92px; margin: 0 11px 0 auto; }

/* Timeline */
.timeline { display: flex; flex-direction: column; height: 326px; margin-top: 9px; }
.tl-head { display: flex; height: 57px; background: #f5f5f5; border-bottom: 2px solid #e0e0e0; }
.tl-name { flex: 0 0 343px; padding-left: 29px; line-height: 57px; font-size: 19px; font-weight: 600; border-right: 1px solid #eaeaea; }
.hours { display: grid; grid-template-columns: repeat(9, 110px); padding-left: 55px; overflow: hidden; font-size: 16px; line-height: 22px; }
.hours span { display: flex; flex-direction: column; justify-content: flex-end; padding: 0 0 5px 4px; white-space: nowrap; background: linear-gradient(#d8d8d8, #d8d8d8) 0 100% / 1px 9px no-repeat; }
.hours em { font-style: normal; font-size: 17px; line-height: 24px; }
.tl-body { display: flex; flex: 1; }
.tl-route { display: flex; flex: 0 0 343px; align-items: flex-start; padding: 7px 0 0 6px; border-right: 1px solid #eaeaea; }
.strip { width: 11px; height: 66px; border-radius: 3px; }
.who { width: 261px; margin: 8px 15px 0 12px; }
.who p { line-height: 28px; overflow: hidden; text-overflow: ellipsis; white-space: nowrap; }
.who small { display: block; font-size: 17px; line-height: 22px; color: #777; }
.tl-route .i-dots { margin-top: 23px; }
.lane { flex: 1; padding: 21px 0 0 55px; }
.run { position: relative; height: 40px; background: #d0e3a9; }
.depot { display: flex; align-items: center; justify-content: center; width: 40px; height: 40px; border: 1px solid #aaa; border-radius: 5px; background: #fff; }
.stop { position: absolute; top: 0; display: flex; align-items: center; width: 110px; height: 40px; padding: 0 6px 0 15px; border: 1px solid #5c8a14; border-radius: 5px; background: #80b61e; color: #fff; font-size: 18px; }
.stop b { width: 42px; font-weight: 700; }
.stop .i20 { margin-right: 12px; }

/* Legend */
.legend { display: flex; align-items: flex-start; height: 81px; border-top: 1px solid #eaeaea; font-size: 17px; line-height: 29px; }
.legend ul { flex: none; display: flex; flex-direction: column; height: 53px; margin-top: 14px; list-style: none; white-space: nowrap; border-right: 2px solid #a5a5a5; }
.legend li { display: flex; align-items: center; gap: 7px; height: 29px; margin-top: -1px; }
.legend .l-a { width: 144px; padding-left: 17px; }
.legend .l-b, .legend .l-e { border-right: 0; }
.legend .l-b { width: 175px; padding-left: 22px; }
.legend .l-c { width: 142px; }
.legend .l-d { width: 225px; padding-left: 22px; }
.legend .l-e { width: 333px; padding-left: 22px; }
.tight { padding: 1px; }
.zone { width: 540px; height: 63px; margin: 5px 0 0; padding: 0 0 0 20px; border: 1px solid #999; border-radius: 6px; }
.zone legend { padding: 0 7px; margin-left: -5px; font-size: 17px; line-height: 18px; color: #777; }
.zone select { appearance: none; width: 100%; padding: 0; border: 0; outline: 0; background: none; font-size: 20px; line-height: 38px; color: #2c2c2c; }
.zoom { display: flex; align-items: center; height: 80px; margin: 0 18px 0 auto; font-size: 19px; }
.zoom .rule + span { margin: 0 19px 0 40px; }
.split.pm { width: 95px; }
.pm button { width: 47px; }
.fit { width: 47px; height: 45px; margin-left: 12px; }
```
